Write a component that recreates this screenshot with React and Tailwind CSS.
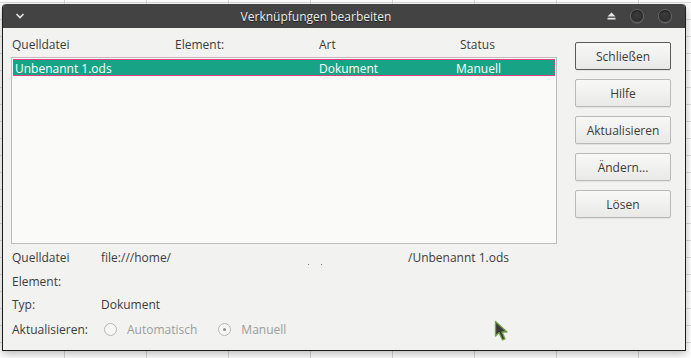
import React from "react";

const font = { fontFamily: "'Open Sans', 'Noto Sans', sans-serif" };

function TitleBar() {
  return (
    <div className="relative flex h-[24px] items-center rounded-t-[4px] bg-[#434343] text-[#ececec]">
      <svg width="10" height="6" viewBox="0 0 10 6" className="ml-[12px]">
        <path d="M1.5 1 L5 4.5 L8.5 1" stroke="#e6e6e6" strokeWidth="1.6" fill="none" />
      </svg>
      <div className="flex-1 text-center text-[12px] leading-[17px] [text-shadow:0_1px_1px_#1e1e1e]">
        Verknüpfungen bearbeiten
      </div>
      <div className="flex items-center gap-[14px] pr-[13px]">
        <svg width="9" height="8" viewBox="0 0 9 8">
          <path d="M4.5 0.5 L8.5 4.5 H0.5 Z" fill="#e6e6e6" />
          <rect x="0.5" y="5.8" width="8" height="1.7" fill="#e6e6e6" />
        </svg>
        <span className="h-[14px] w-[14px] rounded-full border border-[#666] bg-[radial-gradient(circle_at_50%_40%,#3c3c3c,#282828)] shadow-[inset_0_1px_0_#1a1a1a,0_1px_0_#555]" />
        <span className="h-[14px] w-[14px] rounded-full border border-[#666] bg-[radial-gradient(circle_at_50%_40%,#3c3c3c,#282828)] shadow-[inset_0_1px_0_#1a1a1a,0_1px_0_#555]" />
      </div>
    </div>
  );
}

function Button({ children, primary }) {
  return (
    <button
      className={
        "h-[28px] w-[96px] rounded-[2px] border bg-[linear-gradient(#f8f8f7,#e9e9e7)] text-[12px] leading-[17px] text-[#3c3c3c] shadow-[0_1px_0_rgba(0,0,0,0.06)] " +
        (primary ? "border-[#5a5a5a]" : "border-[#b9b9b7]")
      }
    >
      {children}
    </button>
  );
}

function Radio({ checked, label }) {
  return (
    <div className="flex items-center">
      <span className="flex h-[13px] w-[13px] items-center justify-center rounded-full border border-[#b7b7b5] bg-[#f7f7f6]">
        {checked && <span className="h-[3px] w-[3px] rounded-full bg-[#8e8e8e]" />}
      </span>
      <span className="ml-[10px] text-[#9d9d9b]">{label}</span>
    </div>
  );
}

export default function App() {
  return (
    <div
      className="relative h-[358px] w-[691px] overflow-hidden bg-white [background-image:linear-gradient(to_right,#d6d6d6_1px,transparent_1px),linear-gradient(to_bottom,#dcdcdc_1px,transparent_1px)] [background-size:82px_100%,100%_17px] [background-position:64px_0,0_2px]"
      style={font}
    >
      <div className="ml-[2px] mt-[4px] flex h-[347px] w-[684px] flex-col rounded-t-[4px] border-x border-b border-[#1d1d1d] bg-[#f2f2f0] text-[12px] leading-[17px] text-[#3c3c3c] shadow-[0_3px_8px_rgba(0,0,0,0.28)]">
        <TitleBar />
        <div className="flex flex-1">
          <div className="flex w-[546px] flex-col ml-[8px] pt-[8px]">
            <div className="flex h-[17px]">
              <span className="w-[164px] pl-[1px]">Quelldatei</span>
              <span className="w-[144px]">Element:</span>
              <span className="w-[141px]">Art</span>
              <span>Status</span>
            </div>
            <div className="mt-[4px] h-[187px] border border-[#bdbdbb] bg-[#fafaf9] p-px">
              <div className="flex h-[17px] border border-dotted border-[#e0457a] bg-[#17a386] text-white">
                <span className="w-[305px] pl-[1px]">Unbenannt 1.ods</span>
                <span className="w-[137px]">Dokument</span>
                <span>Manuell</span>
              </div>
            </div>
            <div className="mt-[5px] flex flex-col pl-[1px]">
              <div className="flex h-[24px]">
                <span className="w-[89px]">Quelldatei</span>
                <span className="w-[206px]">file:///home/</span>
                <span className="flex w-[101px] items-end gap-[12px] pb-[8px] pl-[1px]">
                  <span className="h-[1px] w-[1px] bg-[#777]" />
                  <span className="h-[1px] w-[1px] bg-[#777]" />
                </span>
                <span>/Unbenannt 1.ods</span>
              </div>
              <div className="flex h-[23px]">
                <span className="w-[89px]">Element:</span>
              </div>
              <div className="flex h-[25px]">
                <span className="w-[89px]">Typ:</span>
                <span>Dokument</span>
              </div>
              <div className="flex h-[17px] items-center">
                <span className="w-[92px]">Aktualisieren:</span>
                <div className="flex gap-[21px]">
                  <Radio label="Automatisch" />
                  <Radio checked label="Manuell" />
                </div>
              </div>
            </div>
          </div>
          <div className="ml-[18px] flex flex-col gap-[9px] pt-[14px]">
            <Button primary>Schließen</Button>
            <Button>Hilfe</Button>
            <Button>Aktualisieren</Button>
            <Button>Ändern...</Button>
            <Button>Lösen</Button>
          </div>
        </div>
      </div>
      <svg
        className="absolute left-[494px] top-[320px]"
        width="17"
        height="25"
        viewBox="0 0 17 25"
      >
        <path
          d="M1.5 1.5 L1.5 16 L5 12.8 L8.5 20 L11 18.8 L8 12 L13 12 Z"
          fill="#3b3b3b"
          stroke="#76a044"
          strokeWidth="1.3"
          strokeLinejoin="round"
        />
      </svg>
    </div>
  );
}
